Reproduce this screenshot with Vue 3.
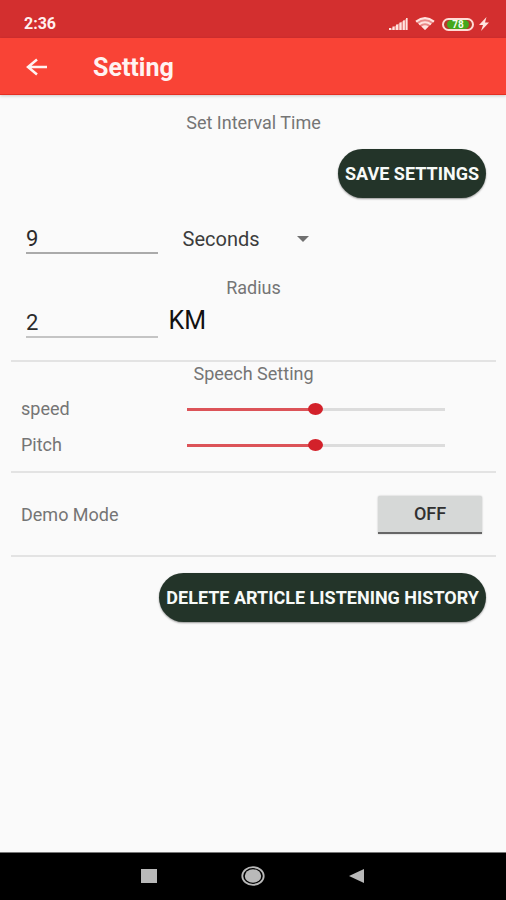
<script setup>
import { ref } from 'vue'

const interval = ref('9')
const unit = ref('Seconds')
const radius = ref('2')
const speed = ref(50)
const pitch = ref(50)
const demo = ref(false)
</script>

<template>
  <div class="screen">
    <div class="status">
      <span class="clock">2:36</span>
      <div class="indicators">
        <svg class="signal" viewBox="0 0 20 14" aria-hidden="true">
          <path d="M1 11h2v2H1zM4.500 9.500h2V13h-2zM8 7.500h2V13H8zM11.500 5.500h2V13h-2zM15 3.500h1.800V13H15zM18 1h1.500v12H18z" />
          <path class="fade" d="M1 13 19.500 1V13z" />
        </svg>
        <svg class="wifi" viewBox="0 0 20 14" aria-hidden="true">
          <path class="fade" d="M1 4.500Q10-2.500 19 4.500L10 13z" />
          <path class="arc" d="M1 4.600Q10-2.300 19 4.600M4 7.400Q10 3 16 7.400" />
          <path d="M6.500 9.500Q10 7 13.500 9.500L10 13z" />
        </svg>
        <div class="battery"><span class="level">78</span></div>
        <svg class="bolt" viewBox="0 0 10 14" aria-hidden="true">
          <path d="M7.500 0 0 8h4L2 14l8-8.500H6z" />
        </svg>
      </div>
    </div>

    <header class="bar">
      <button class="back" type="button" aria-label="Back">
        <svg viewBox="0 0 22 18" aria-hidden="true">
          <path d="M21 9H2M11 1.500 2 9l9 7.500" />
        </svg>
      </button>
      <h1>Setting</h1>
    </header>

    <main>
      <section class="general">
        <h2>Set Interval Time</h2>
        <button class="pill" type="button">SAVE SETTINGS</button>
        <div class="row interval">
          <input v-model="interval" class="field" type="text" aria-label="Interval time" />
          <div class="picker">
            <select v-model="unit" aria-label="Interval unit">
              <option>Seconds</option>
              <option>Minutes</option>
            </select>
            <svg viewBox="0 0 12 6" aria-hidden="true"><path d="M0 0h12L6 6z" /></svg>
          </div>
        </div>
        <h2>Radius</h2>
        <div class="row radius">
          <input id="radius" v-model="radius" class="field" type="text" />
          <label class="km" for="radius">KM</label>
        </div>
      </section>

      <section class="speech">
        <h2>Speech Setting</h2>
        <div class="slider">
          <label for="speed">speed</label>
          <input id="speed" v-model="speed" type="range" min="0" max="100" />
        </div>
        <div class="slider">
          <label for="pitch">Pitch</label>
          <input id="pitch" v-model="pitch" type="range" min="0" max="100" />
        </div>
      </section>

      <section class="demo">
        <label for="demo">Demo Mode</label>
        <button id="demo" class="toggle" type="button" :aria-pressed="demo" @click="demo = !demo">
          {{ demo ? 'ON' : 'OFF' }}
        </button>
      </section>

      <button class="pill history" type="button">DELETE ARTICLE LISTENING HISTORY</button>
    </main>

    <nav class="nav">
      <button type="button" aria-label="Recent apps">
        <svg viewBox="0 0 26 20" aria-hidden="true"><path d="M5 3h16v14H5z" /></svg>
      </button>
      <button type="button" aria-label="Home">
        <svg viewBox="0 0 26 20" aria-hidden="true">
          <ellipse cx="13" cy="10" rx="8.200" ry="6.700" />
          <ellipse class="ring" cx="13" cy="10" rx="10.700" ry="8.800" />
        </svg>
      </button>
      <button type="button" aria-label="Back">
        <svg viewBox="0 0 26 20" aria-hidden="true"><path d="M5 10 20 3v14z" /></svg>
      </button>
    </nav>
  </div>
</template>

<style>
body {
  margin: 0;
}
</style>

<style scoped>
.screen {
  display: flex;
  flex-direction: column;
  min-height: 100vh;
  background: #fafafa;
  color: #757575;
  font-family: Roboto, "Liberation Sans", sans-serif;
  font-size: 18px;
  line-height: 24px;
}

button,
input,
select {
  margin: 0;
  padding: 0;
  border: 0;
  border-radius: 0;
  background: none;
  color: inherit;
  font: inherit;
}

button {
  cursor: pointer;
}

svg {
  display: block;
}

.status {
  display: flex;
  align-items: center;
  justify-content: space-between;
  box-sizing: border-box;
  height: 38px;
  padding: 10px 17px 0 24px;
  background: #d32f2f;
  color: #fff0ee;
}

.clock {
  font-size: 16px;
  font-weight: 700;
}

.indicators {
  display: flex;
  align-items: center;
  fill: #ffe3df;
}

.signal,
.wifi {
  width: 20px;
  height: 14px;
  margin-right: 7px;
}

.fade {
  opacity: 0.5;
}

.arc {
  fill: none;
  stroke: #ffe3df;
  stroke-width: 2;
}

.battery {
  box-sizing: border-box;
  width: 32px;
  height: 13px;
  margin-right: 5px;
  padding: 1px;
  border: 2px solid #ffdcd6;
  border-radius: 7px;
  background: #b8382a;
}

.level {
  display: block;
  width: 22px;
  margin: -1px auto;
  border-radius: 5px;
  background: #45a81c;
  color: #f4fff0;
  font-size: 10px;
  font-weight: 700;
  line-height: 9px;
  text-align: center;
}

.bolt {
  width: 10px;
  height: 14px;
}

.bar {
  display: flex;
  align-items: center;
  height: 57px;
  padding: 0 26px;
  background: #f94336;
  box-shadow: inset 0 -1px #e52f22, 0 1px 3px #00000033;
  color: #fff3f1;
}

.back {
  width: 22px;
  margin-right: 45px;
}

.back svg {
  width: 22px;
  height: 18px;
  fill: none;
  stroke: currentColor;
  stroke-width: 2.500;
}

h1 {
  margin: 2px 0 0;
  font-size: 25px;
  font-weight: 700;
  line-height: 32px;
}

main {
  display: flex;
  flex: 1;
  flex-direction: column;
  padding: 0 10px 24px 11px;
}

section {
  border-bottom: 2px solid #e3e3e3;
}

h2 {
  margin: 0;
  font-size: 18px;
  font-weight: 400;
  text-align: center;
}

.general {
  display: flex;
  flex-direction: column;
  padding: 16px 0 22px;
}

.pill {
  align-self: flex-end;
  height: 49px;
  margin: 14px 10px 26px;
  padding: 0 7px;
  border-radius: 25px;
  background: #233429;
  box-shadow: 0 1px 2px #00000066;
  color: #f7faf8;
  font-size: 18px;
  font-weight: 700;
  white-space: nowrap;
}

.row {
  display: flex;
  align-items: center;
  height: 30px;
  padding-left: 15px;
  color: #2b2b2b;
}

.interval {
  margin-bottom: 22px;
}

.radius {
  margin-top: 8px;
}

.field {
  box-sizing: border-box;
  width: 28%;
  height: 30px;
  border-bottom: 2px solid #aaa;
  font-size: 22px;
}

.radius .field {
  border-color: #c4c4c4;
}

.picker {
  display: flex;
  align-items: center;
  justify-content: space-between;
  width: 126px;
  margin-left: 25px;
}

.picker select {
  flex: 1;
  height: 28px;
  appearance: none;
  color: #3c3c3c;
  font-size: 20px;
}

.picker svg {
  width: 12px;
  height: 6px;
  fill: #707070;
}

.km {
  margin: 0 0 4px 11px;
  color: #111;
  font-size: 25px;
}

.speech {
  padding-bottom: 8px;
}

.speech h2 {
  margin-bottom: 5px;
}

.slider {
  display: flex;
  align-items: center;
  height: 36px;
  padding: 0 51px 0 10px;
}

.slider label {
  flex: 9;
}

.slider input {
  flex: 14;
  min-width: 0;
  height: 20px;
  appearance: none;
  background: linear-gradient(90deg, #dc5358 50%, #dcdcdc 50%) center / 100% 3px no-repeat;
}

.slider input::-webkit-slider-thumb {
  width: 15px;
  height: 12px;
  appearance: none;
  border-radius: 50%;
  background: #d3212a;
}

.demo {
  display: flex;
  align-items: center;
  justify-content: space-between;
  padding: 23px 14px 21px 10px;
}

.toggle {
  width: 104px;
  height: 38px;
  border-bottom: 2px solid #666;
  border-radius: 2px 2px 0 0;
  background: #d6d8d7;
  box-shadow: 0 0 2px #00000044;
  color: #303030;
  font-weight: 500;
}

.history {
  margin-top: 16px;
  margin-bottom: 0;
}

.nav {
  display: flex;
  align-items: center;
  justify-content: center;
  gap: 78px;
  box-sizing: border-box;
  height: 48px;
  padding-bottom: 1px;
  border-top: 1px solid #777;
  background: #000;
  fill: #b9b9b9;
}

.nav svg {
  width: 26px;
  height: 20px;
}

.ring {
  fill: none;
  stroke: #b9b9b9;
  stroke-width: 1.800;
}
</style>
